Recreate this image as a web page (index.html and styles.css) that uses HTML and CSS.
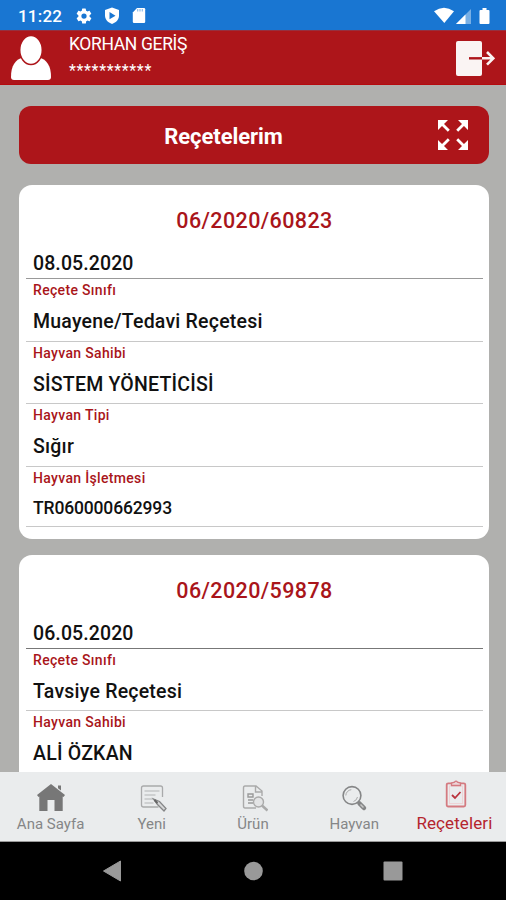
FILE: index.html
```html
<!DOCTYPE html>
<html lang="tr">
<head>
<meta charset="utf-8">
<title>Reçetelerim</title>
<link rel="stylesheet" href="styles.css">
</head>
<body>
<div class="status">
  <span class="clock">11:22</span>
  <svg class="gear" width="18" height="18" viewBox="0 0 24 24"><path fill="#fff" fill-rule="evenodd" d="M19.4 13a7.500 7.500 0 0 0 0-2l2.100-1.600c.2-.2.3-.4.1-.7l-2-3.400c-.1-.2-.4-.3-.6-.2l-2.500 1a7.300 7.300 0 0 0-1.700-1l-.4-2.600a.5.5 0 0 0-.5-.5h-4a.5.5 0 0 0-.5.5L9.100 5.100a7.300 7.300 0 0 0-1.700 1l-2.500-1c-.2-.1-.5 0-.6.2l-2 3.400c-.1.200-.1.500.1.700L4.500 11a7.500 7.500 0 0 0 0 2l-2.100 1.600c-.2.200-.2.500-.1.700l2 3.400c.1.200.4.300.6.200l2.500-1c.5.400 1.100.8 1.700 1l.4 2.600c0 .3.200.5.500.5h4c.2 0 .5-.2.500-.5l.4-2.600c.6-.3 1.200-.6 1.700-1l2.500 1c.2.100.5 0 .6-.2l2-3.400c.1-.2.100-.5-.1-.7zM12 15.500a3.500 3.500 0 1 1 0-7 3.500 3.500 0 0 1 0 7z"/></svg>
  <svg class="shield" width="16" height="18" viewBox="0 0 16 18"><path fill="#fff" d="M8 .5 15 3v5.500c0 4-2.800 7-7 8.500-4.200-1.500-7-4.500-7-8.500V3z"/><path fill="#1976d2" d="m5.500 5 6 3.700-6 3.600z"/></svg>
  <svg class="sd" width="14" height="17" viewBox="0 0 14 17"><path fill="#fff" d="M5 1h7q1.200 0 1.200 1.200v12.600q0 1.200-1.200 1.200H2q-1.200 0-1.200-1.200V5.500z"/><path stroke="#8fbdea" stroke-width="1.200" d="M5.700 2v2.500M8 2v2.500M10.300 2v2.500"/></svg>
  <svg class="signals" width="58" height="18" viewBox="0 0 58 18"><path fill="#fff" d="M0 4.300Q10 -3 20 4.300L10.300 16z"/><path fill="#78afe5" d="M22 17 37 2v15z"/><path fill="#fff" d="M22 17 31.500 7.500V17z"/><path fill="#fff" d="M48.500 1h4v2h2q1 0 1 1v12q0 1-1 1h-8q-1 0-1-1V4q0-1 1-1h2z"/></svg>
</div>
<header class="user">
  <svg class="avatar" width="42" height="46" viewBox="0 0 42 46"><path fill="#fff" d="M1 42c0-11 4-17.500 12-19.500h16c8 2 12 8.500 12 19.500q0 3-3 3H4q-3 0-3-3z"/><ellipse cx="21" cy="15" rx="11.300" ry="14.500" fill="#fff" stroke="#ad151a" stroke-width="1.500"/></svg>
  <div class="who"><div class="name">KORHAN GERİŞ</div><div class="stars">***********</div></div>
  <svg class="exit" width="40" height="37" viewBox="0 0 40 37"><rect x="1" y="1" width="26" height="35" rx="2" fill="#faf4f3"/><path d="M14 18.300h13" stroke="#ad151a" stroke-width="2.400"/><path d="M27 18.300h11M32 12l6.300 6.300-6.300 6.300" fill="none" stroke="#faf4f3" stroke-width="2.600"/></svg>
</header>
<main class="content">
  <div class="banner">
    <h1>Reçetelerim</h1>
    <svg class="expand" width="30" height="30" viewBox="0 0 30 30"><g fill="none" stroke="#fff" stroke-width="2.800"><path d="M2 2l8.800 8.800M28 2l-8.800 8.800M2 28l8.800-8.800M28 28l-8.800-8.800"/></g><path fill="#fff" d="M0 0h10L7 3 3 7l-3 3zM30 0v10l-3-3-4-4-3-3zM0 30V20l3 3 4 4 3 3zM30 30H20l3-3 4-4 3-3z"/></svg>
  </div>
  <section class="card">
    <h2>06/2020/60823</h2>
    <div class="date">08.05.2020</div>
    <div class="field"><label>Reçete Sınıfı</label><p>Muayene/Tedavi Reçetesi</p></div>
    <div class="field"><label>Hayvan Sahibi</label><p>SİSTEM YÖNETİCİSİ</p></div>
    <div class="field"><label>Hayvan Tipi</label><p>Sığır</p></div>
    <div class="field last"><label>Hayvan İşletmesi</label><p class="code">TR060000662993</p></div>
  </section>
  <section class="card">
    <h2>06/2020/59878</h2>
    <div class="date dark">06.05.2020</div>
    <div class="field"><label>Reçete Sınıfı</label><p>Tavsiye Reçetesi</p></div>
    <div class="field"><label>Hayvan Sahibi</label><p>ALİ ÖZKAN</p></div>
  </section>
</main>
<nav class="tabs">
  <a class="tab"><svg width="30" height="30" viewBox="0 0 30 30"><path fill="#777" d="M15 1 29 12l-1.500 2-.8-.5V28H18.500V17h-7v11H3.300V13.500l-.8.500L1 12zM22 2.500h3v5l-3-2.300z"/></svg><span>Ana Sayfa</span></a>
  <a class="tab"><svg width="30" height="30" viewBox="-2.500 0 30 30"><g fill="none" stroke="#a9aaab" stroke-width="1.300"><path d="M23 14V5q0-2-2-2H4Q2 3 2 5v17q0 2 2 2h15"/><path d="M5 8h15M5 12h11M5 16h9M5 20h9" stroke="#c5c6c7"/><path fill="#d6d7d8" stroke="#858687" d="m14 16 6 2.500 6.500 7-2 2.500-6.500-6.500z"/><path d="m15 17 3 3" stroke="#666" stroke-width="2"/></g></svg><span>Yeni</span></a>
  <a class="tab"><svg width="30" height="30" viewBox="-2 0 30 30"><g fill="none" stroke="#aaa" stroke-width="1.400"><path d="M22 13V8l-6-5H5Q3.500 3 3.500 5v18q0 2 1.500 2h11M15.500 3v6H22"/><path d="M8 11h5v3H8zM8 17h5M8 20h5" stroke="#999"/><circle cx="18.500" cy="19" r="5" fill="#e3e4e5"/><path d="m22 22.500 5.500 5" stroke-width="2.500"/></g></svg><span>Ürün</span></a>
  <a class="tab"><svg width="30" height="30" viewBox="0 0 30 30"><g fill="none" stroke="#858687"><circle cx="13" cy="12.500" r="8.900" stroke-width="1.600"/><path d="M6.800 12.500a6 6 0 0 1 5.500-5.800M18.500 14a6 6 0 0 1-4 4.500" stroke="#aaa"/><path d="m19 19 2 2" stroke-width="2"/><path d="m20.500 20.500 4.500 4.500" stroke-width="4.500" stroke-linecap="round"/><path d="m21.500 21.500 3 3" stroke="#c8c8c8" stroke-width="1.500"/></g></svg><span>Hayvan</span></a>
  <a class="tab active"><svg width="30" height="30" viewBox="0 0 30 30"><g fill="none" stroke="#d47a80" stroke-width="1.800"><rect x="6.700" y="4.300" width="18.600" height="23.200" rx="1.500"/><rect x="9.500" y="7" width="13" height="17.500" stroke="#eed3d6" stroke-width="1"/><path fill="#edd6d8" d="M11.500 6.500V4l3-.8q1.500-2 3 0l3 .8v2.500z" stroke-width="1.300"/><path d="m12 16 3 3 5.500-6" stroke="#b9333d"/></g></svg><span>Reçeteleri</span></a>
</nav>
<footer class="system">
  <svg width="20" height="22" viewBox="0 0 20 22"><path fill="#999" stroke="#999" stroke-linejoin="round" d="M1.500 11 18.500 1v20z"/></svg>
  <svg width="20" height="20" viewBox="0 0 20 20"><circle cx="10.500" cy="10" r="9.300" fill="#999"/></svg>
  <svg width="20" height="20" viewBox="0 0 20 20"><rect x=".5" y=".5" width="19" height="19" rx="1" fill="#999"/></svg>
</footer>
</body>
</html>
```
FILE: styles.css
```css
* { box-sizing: border-box; margin: 0; }
body { width: 506px; height: 900px; overflow: hidden; display: flex; flex-direction: column; font-family: Roboto, "Liberation Sans", sans-serif; background: #b0b0ae; }
svg { display: block; flex: none; }
.status { height: 30px; flex: none; background: #1976d2; display: flex; align-items: center; padding: 1px 14px 0 18px; color: #fff; }
.clock { font-size: 17px; font-weight: 500; letter-spacing: .2px; width: 57px; line-height: 30px; }
.shield { margin-left: 11px; }
.sd { margin-left: 12px; }
.signals { margin-left: auto; }
.user { height: 55px; flex: none; background: #ad151a; border-top: 1px solid #96303f; border-bottom: 1px solid #b50a0e; display: flex; padding: 4px 11px 0 10px; color: #fff; }
.who { margin-left: 17px; flex: 1; }
.name { font-size: 17.500px; line-height: 20px; letter-spacing: -.35px; margin-top: -1px; }
.stars { font-size: 16px; line-height: 20px; margin-top: 7px; letter-spacing: .65px; }
.exit { margin-top: 5px; }
.content { flex: 1; min-height: 0; overflow: hidden; padding: 21px 17px 0 19px; }
.banner { height: 58px; border-radius: 12px; background: #ad151a; display: grid; grid-template-columns: 1fr auto; align-items: center; padding: 0 21px 0 0; margin-bottom: 21px; color: #fff; }
.banner h1 { font-size: 22px; font-weight: 700; text-align: center; line-height: 30px; padding: 3px 10px 0 0; letter-spacing: -.05px; }
.card { height: 354px; border-radius: 13px; background: #fff; margin-bottom: 15.500px; padding: 0 6px 0 7px; }
.card h2 { color: #a9151a; font-size: 21.500px; font-weight: 500; letter-spacing: .4px; line-height: 30px; padding-top: 21px; text-align: center; }
.date { height: 43px; padding: 13px 0 0 7px; font-size: 19.500px; font-weight: 500; line-height: 30px; border-bottom: 1.500px solid #999; color: #111; letter-spacing: .1px; }
.dark { border-color: #777; }
.field { height: 62.700px; border-bottom: 1px solid #c8c8c8; padding: 1px 0 0 7px; }
.field label { display: block; color: #a9151a; font-size: 14px; font-weight: 500; line-height: 20px; letter-spacing: .33px; }
.field p { color: #111; font-size: 19.500px; font-weight: 500; line-height: 30px; padding-top: 7px; letter-spacing: .22px; }
.field.last { height: 59.700px; }
.field p.code { font-size: 17.500px; padding-top: 5px; letter-spacing: -.15px; }
.tabs { height: 70px; flex: none; background: #eaeced; border-bottom: 1px solid #999; display: grid; grid-template-columns: repeat(5, 1fr); }
.tab { display: flex; flex-direction: column; align-items: center; padding-top: 11px; color: #858687; font-size: 15px; }
.tab span { line-height: 20px; margin-top: 1px; white-space: nowrap; }
.tab.active { color: #b5252e; font-size: 17px; padding-top: 7px; }
.tab.active span { margin: 4px 2px 0 0; letter-spacing: .1px; }
.system { height: 58px; flex: none; background: #000; display: flex; align-items: center; justify-content: space-between; padding: 0 103px 0 102px; }
```
